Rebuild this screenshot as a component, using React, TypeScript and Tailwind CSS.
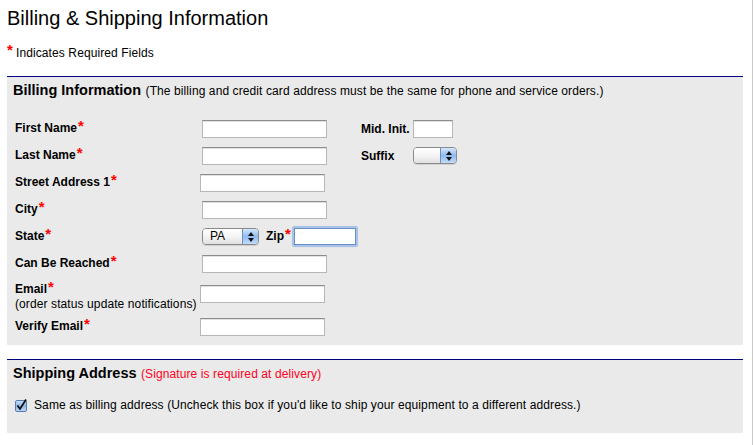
import React from "react";

const Star = () => (
  <span className="text-[#ff0000] font-bold text-[15px] leading-none align-top relative top-[-3px] ml-[1px]">*</span>
);

const Field = ({ w = 125, ml = 0 }: { w?: number; ml?: number }) => (
  <div
    className="h-[18px] bg-white border border-[#b7b7b7] border-t-[#8c8c8c] shadow-[inset_0_1px_0_#e2e2e2]"
    style={{ width: w, marginLeft: ml }}
  />
);

const Select = ({ w, label }: { w: number; label?: string }) => (
  <div
    className="h-[17px] flex rounded-[4px] border border-[#8a8a8a] overflow-hidden shadow-[0_1px_0_#d0d0d0]"
    style={{ width: w }}
  >
    <div className="flex-1 bg-gradient-to-b from-[#ffffff] via-[#f4f4f4] to-[#e0e0e0] text-[12px] leading-[15px] pl-[7px]">
      {label}
    </div>
    <div className="w-[16px] border-l border-[#6f8fc0] bg-gradient-to-b from-[#d5e6fb] via-[#8fbaf0] to-[#c3dcfa] flex flex-col items-center justify-center gap-[2px]">
      <svg width="6" height="4" viewBox="0 0 6 4"><path d="M3 0 L6 4 L0 4 Z" fill="#111" /></svg>
      <svg width="6" height="4" viewBox="0 0 6 4"><path d="M0 0 L6 0 L3 4 Z" fill="#111" /></svg>
    </div>
  </div>
);

const Label = ({ children, w = 187 }: { children: React.ReactNode; w?: number }) => (
  <div className="font-bold text-[12px] leading-[14px] shrink-0" style={{ width: w }}>
    {children}
  </div>
);

export default function App() {
  return (
    <div className="w-[753px] h-[445px] bg-white border-r border-[#c9c9c9] overflow-hidden font-['Liberation_Sans',Arial,sans-serif] text-black">
      <div className="pl-[7px] w-[743px]">
        <h1 className="text-[20px] leading-[24px] pt-[6px] font-normal">
          Billing &amp; Shipping Information
        </h1>
        <div className="mt-[16px] h-[14px] text-[12px] leading-[14px] flex items-start tracking-[0.1px]">
          <span className="text-[#ff0000] font-bold text-[15px] leading-none relative top-[-4px] w-[9px]">*</span>
          <span>Indicates Required Fields</span>
        </div>

        {/* Billing panel */}
        <div className="mt-[16px] border-t border-[#00007f] bg-[#eaeaea] pb-[5px]">
          <div className="pt-[4px] pl-[6px] leading-[18px]">
            <span className="font-bold text-[14.5px]">Billing Information</span>{" "}
            <span className="text-[12px] tracking-[0.1px]">(The billing and credit card address must be the same for phone and service orders.)</span>
          </div>
          <div className="mt-[15px] pl-[8px] flex flex-col">
            <div className="h-[27px] flex items-center">
              <Label>First Name<Star /></Label>
              <Field />
              <div className="ml-[34px] w-[52px] font-bold text-[12px] leading-[14px]">Mid. Init.</div>
              <Field w={40} />
            </div>
            <div className="h-[27px] flex items-center">
              <Label>Last Name<Star /></Label>
              <Field />
              <div className="ml-[34px] w-[52px] font-bold text-[12px] leading-[14px]">Suffix</div>
              <Select w={44} />
            </div>
            <div className="h-[27px] flex items-center">
              <Label>Street Address 1<Star /></Label>
              <Field ml={-2} />
            </div>
            <div className="h-[27px] flex items-center">
              <Label>City<Star /></Label>
              <Field />
            </div>
            <div className="h-[27px] flex items-center">
              <Label>State<Star /></Label>
              <Select w={57} label="PA" />
              <div className="ml-[7px] w-[26px] font-bold text-[12px] leading-[14px]">
                Zip<Star />
              </div>
              <div className="w-[66px] h-[21px] rounded-[3px] bg-[#a9c3e6] p-[2px] shadow-[0_0_1px_#a9c3e6]">
                <div className="w-full h-full bg-white border border-[#6a8fc6]" />
              </div>
            </div>
            <div className="h-[27px] flex items-center">
              <Label>Can Be Reached<Star /></Label>
              <Field />
            </div>
            <div className="h-[36px] flex items-start">
              <div className="w-[187px] shrink-0 pt-[5px] text-[12px] leading-[14px]">
                <div className="font-bold">Email<Star /></div>
                <div className="tracking-[0.1px]">(order status update notifications)</div>
              </div>
              <div className="mt-[8px]">
                <Field ml={-2} />
              </div>
            </div>
            <div className="h-[27px] flex items-center">
              <Label>Verify Email<Star /></Label>
              <Field ml={-2} />
            </div>
          </div>
        </div>

        {/* Shipping panel */}
        <div className="mt-[14px] border-t border-[#00007f] bg-[#eaeaea] pb-[21px]">
          <div className="pt-[4px] pl-[6px] leading-[18px]">
            <span className="font-bold text-[14.5px]">Shipping Address</span>{" "}
            <span className="text-[12px] text-[#ff0022] tracking-[0.1px]">(Signature is required at delivery)</span>
          </div>
          <div className="mt-[15px] pl-[8px] flex items-center h-[14px] text-[12px] leading-[14px]">
            <svg width="12" height="13" viewBox="0 0 12 13" className="shrink-0">
              <defs>
                <linearGradient id="cb" x1="0" y1="0" x2="0" y2="1">
                  <stop offset="0" stopColor="#cfe2fa" />
                  <stop offset="0.5" stopColor="#8ab6ec" />
                  <stop offset="1" stopColor="#c4dbf8" />
                </linearGradient>
              </defs>
              <rect x="0.5" y="1.5" width="11" height="11" rx="1.5" fill="url(#cb)" stroke="#5a7cae" />
              <path d="M2.5 6.5 L5 10 L11 0.5" fill="none" stroke="#111" strokeWidth="1.8" />
            </svg>
            <span className="ml-[7px] tracking-[0.1px]">
              Same as billing address (Uncheck this box if you'd like to ship your equipment to a different address.)
            </span>
          </div>
        </div>
      </div>
    </div>
  );
}
